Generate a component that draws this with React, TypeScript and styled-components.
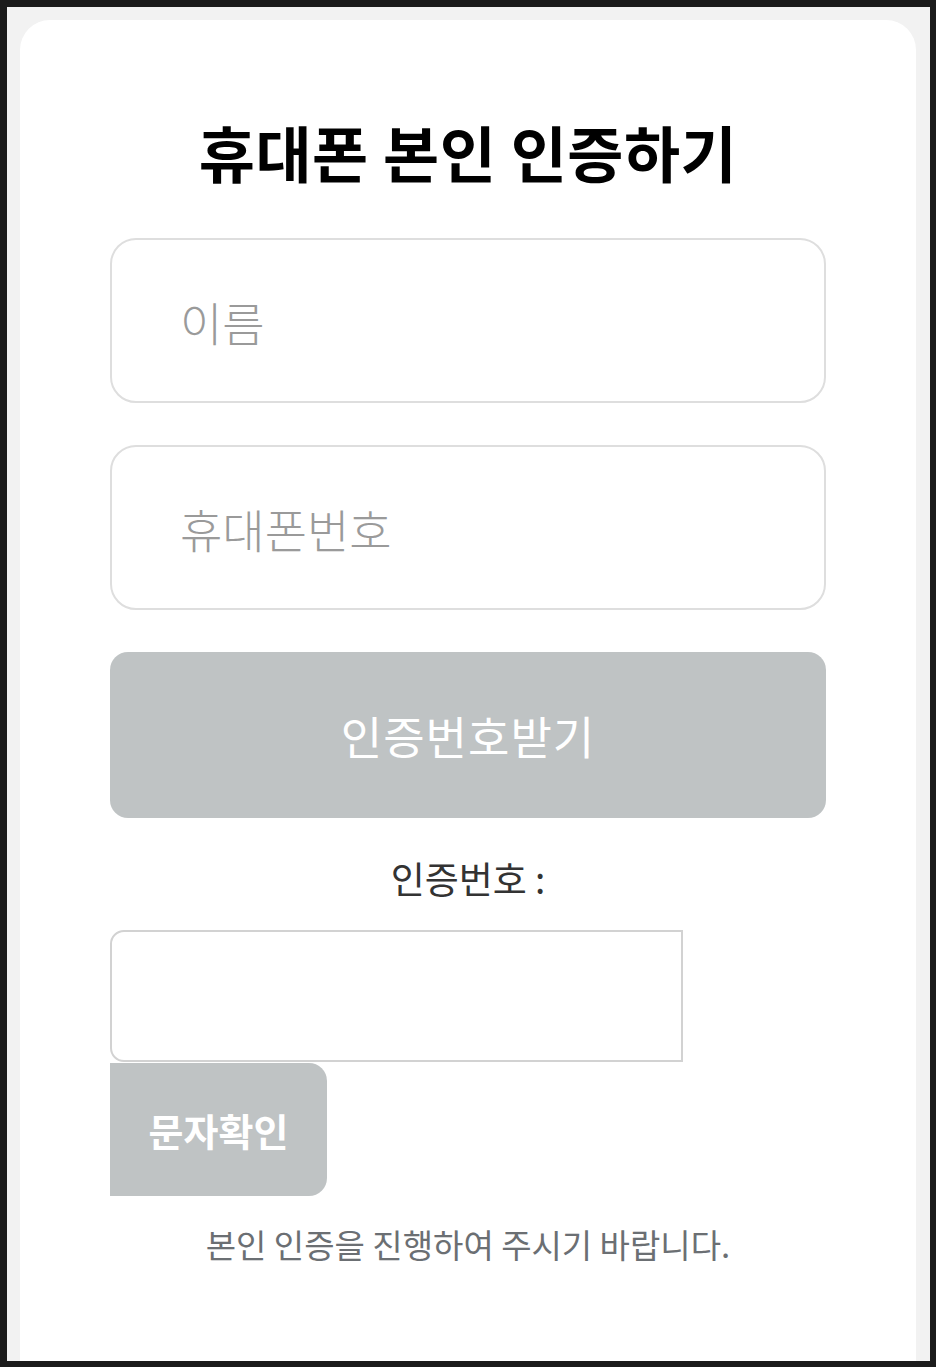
import styled, { createGlobalStyle } from "styled-components";

const GlobalStyle = createGlobalStyle`
  html, body {
    margin: 0;
    padding: 0;
    background: #1b1b1b;
  }
  body {
    font-family: "Noto Sans CJK KR", "Noto Sans", sans-serif;
  }
  * {
    box-sizing: border-box;
  }
`;

export default function App() {
  return (
    <>
      <GlobalStyle />
      <Frame>
        <Screen>
          <Card>
            <Title>휴대폰 본인 인증하기</Title>
            <Form>
              <TextField placeholder="이름" />
              <TextField placeholder="휴대폰번호" />
              <RequestBtn type="button">인증번호받기</RequestBtn>
              <CodeLabel>인증번호 :</CodeLabel>
              <CodeGroup>
                <CodeInput />
                <ConfirmBtn type="button">문자확인</ConfirmBtn>
              </CodeGroup>
              <Notice>본인 인증을 진행하여 주시기 바랍니다.</Notice>
            </Form>
          </Card>
        </Screen>
      </Frame>
    </>
  );
}

const Frame = styled.div`
  height: 1367px;
  padding: 7px 6px 6px 7px;
  overflow: hidden;
`;

const Screen = styled.div`
  height: 100%;
  background: #f2f2f2;
  padding: 13px 14px 0 13px;
  overflow: hidden;
`;

const Card = styled.div`
  min-height: 1400px;
  background: #fff;
  border-radius: 30px 30px 0 0;
  padding: 92px 90px 0;
`;

const Title = styled.h1`
  margin: 0 0 46px;
  text-align: center;
  font-size: 61px;
  font-weight: 700;
  line-height: 80px;
  color: #000;
  letter-spacing: 0.5px;
`;

const Form = styled.div`
  display: flex;
  flex-direction: column;
`;

const TextField = styled.input`
  height: 165px;
  margin-bottom: 42px;
  padding: 0 0 0 68px;
  border: 2px solid #dedede;
  border-radius: 26px;
  font-family: inherit;
  font-size: 46px;
  font-weight: 300;
  color: #333;
  outline: none;
  &::placeholder {
    color: #9a9a9a;
  }
`;

const RequestBtn = styled.button`
  height: 166px;
  margin: 0;
  border: 0;
  border-radius: 18px;
  background: #bfc3c4;
  color: #fff;
  font-family: inherit;
  font-size: 45px;
  font-weight: 400;
  letter-spacing: 1px;
`;

const CodeLabel = styled.div`
  margin: 34px 0 26px;
  text-align: center;
  font-size: 37px;
  line-height: 52px;
  color: #333;
`;

const CodeGroup = styled.div`
  display: flex;
  flex-direction: column;
  align-items: flex-start;
`;

const CodeInput = styled.input`
  width: 573px;
  height: 132px;
  border: 2px solid #d2d2d2;
  border-radius: 14px 0 0 14px;
  outline: none;
  font-family: inherit;
  font-size: 34px;
`;

const ConfirmBtn = styled.button`
  width: 217px;
  height: 133px;
  margin-top: 1px;
  border: 0;
  border-radius: 0 18px 18px 0;
  background: #bfc3c4;
  color: #fff;
  font-family: inherit;
  font-size: 38px;
  font-weight: 700;
  padding: 0;
`;

const Notice = styled.p`
  margin: 24px 0 0;
  text-align: center;
  font-size: 33px;
  line-height: 48px;
  color: #6b6f73;
`;
